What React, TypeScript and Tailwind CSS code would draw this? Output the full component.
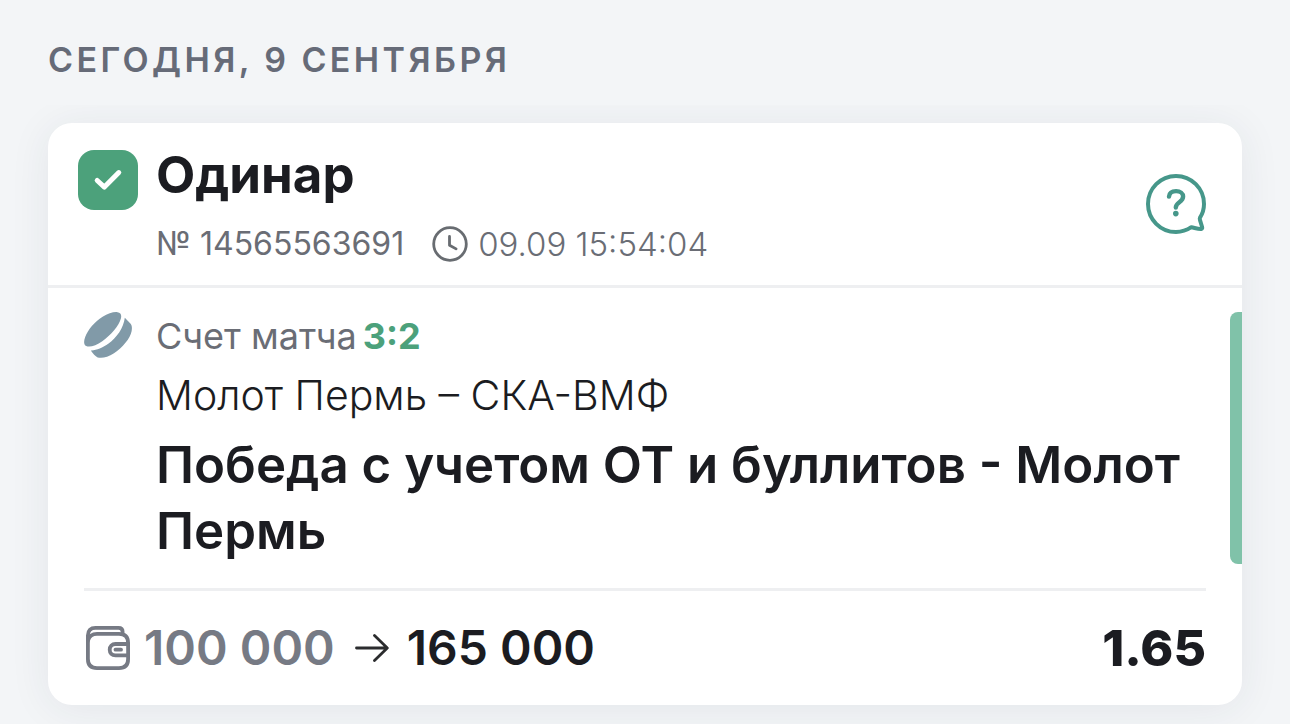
import React from "react";

function CheckBadge() {
  return (
    <span className="flex size-[60px] shrink-0 items-center justify-center rounded-2xl bg-[#4ca17b]">
      <svg viewBox="0 0 60 60" className="size-[60px]" fill="none" role="img" aria-label="Выигрыш">
        <path d="M19.2 30.5L26.4 37.1L40.8 22.6" stroke="#fff" strokeWidth="5" strokeLinecap="round" strokeLinejoin="round" />
      </svg>
    </span>
  );
}

function HelpIcon() {
  return (
    <svg viewBox="0 0 60 60" className="size-[60px]" fill="none" stroke="#46978a" strokeLinecap="round" strokeLinejoin="round" aria-hidden="true">
      <path
        d="M54 43.6C56.6 39.6 58 34.9 58 30A28 28 0 1 0 30 58C35.8 58 40.8 56.3 45.3 53.2C48.8 53.9 52.5 55.3 55.2 55C56.2 54.8 56.4 54 56.1 53L54 46.2C53.7 45.2 53.6 44.4 54 43.6Z"
        strokeWidth="4"
      />
      <path d="M23 22.6C23.3 19 26.2 17.1 30.1 17.1C34.2 17.1 37.1 19.3 37.1 22.6C37.1 28.4 29.8 28.2 29.8 33.6" strokeWidth="4.4" />
      <circle cx="29.8" cy="39.6" r="2.8" fill="#46978a" stroke="none" />
    </svg>
  );
}

function ClockIcon() {
  return (
    <svg viewBox="0 0 36 36" className="size-9 shrink-0" fill="none" stroke="#686c71" strokeWidth="2.8" strokeLinecap="round" strokeLinejoin="round" aria-hidden="true">
      <circle cx="18" cy="18" r="16.3" />
      <path d="M17.5 10.5v8.7l6.6 3.7" />
    </svg>
  );
}

function PuckIcon() {
  return (
    <svg viewBox="0 0 48 46" className="h-[46px] w-12 shrink-0" fill="#819aa8" aria-hidden="true">
      <path d="M33.5.2C36.8.6 37.8 3 36.9 6.6C35 13.6 27 23.2 18.3 29.2C12 33.6 5.8 35.6 2.2 34C-.3 32.8-.4 29.2 1.1 25.2C3.7 18 10.7 9.5 18.6 4.7C24 1.500 29.500-.300 33.500.200Z" />
      <path d="M40.8 5.8L46.4 11.4C48 13 48.200 16 47.600 19.200C46.200 26.400 38.500 35.500 30 41.300C23.700 45.500 17.400 46.600 13.700 45.400C11.200 44 9 41.600 6.800 38.400C12 38.700 18.400 36.100 24.600 31.600C32.500 25.800 39.600 16.200 40.800 5.800Z" />
    </svg>
  );
}

function WalletIcon() {
  return (
    <svg viewBox="0 0 44 44" className="size-11 shrink-0" fill="none" stroke="#767a84" strokeWidth="3.8" strokeLinecap="round" strokeLinejoin="round" aria-hidden="true">
      <path d="M1.9 15V9.5C1.9 4.5 4.5 1.9 9.5 1.9H32.5C35 1.9 36.6 3.3 36.6 5.7V8" />
      <path d="M2.2 14C3.3 9.8 6.3 7.8 11 7.8H33C39 7.8 42.1 11 42.1 17V33C42.1 39 39 42.1 33 42.1H11C5 42.1 1.9 39 1.9 33V15" />
      <path d="M42 18H29.5C26 18 23.7 20.3 23.7 23.7C23.7 27.1 26 29.4 29.5 29.4H42" />
      <path d="M29.5 23.7H35" />
    </svg>
  );
}

function ArrowIcon() {
  return (
    <svg viewBox="0 0 34 28" className="h-7 w-[34px] shrink-0" fill="none" stroke="#2b2c2e" strokeWidth="2.8" strokeLinecap="round" strokeLinejoin="round" role="img" aria-label="выплата">
      <path d="M1.5 14H32M19.5 1.5L32.3 14L19.5 26.5" />
    </svg>
  );
}

function BetCard() {
  return (
    <article className="rounded-3xl bg-white shadow-[0_4px_40px_rgba(40,50,80,0.08)]">
      <header className="flex items-center border-b-[3px] border-[#eeeff1] pr-9 pl-[30px]">
        <div className="flex grow gap-[18px] pt-[27px] pb-[21px]">
          <CheckBadge />
          <div>
            <h2 className="text-[51px] leading-[50px] font-bold">Одинар</h2>
            <div className="mt-6 flex items-center gap-7 text-[32px] leading-10 text-[#6a6d75]">
              <span>№ 14565563691</span>
              <span className="flex items-center gap-2.5">
                <ClockIcon />
                <time className="text-[33px] font-light">09.09 15:54:04</time>
              </span>
            </div>
          </div>
        </div>
        <button type="button" aria-label="Помощь" className="shrink-0">
          <HelpIcon />
        </button>
      </header>

      <div className="flex justify-between pl-9">
        <div className="flex gap-6 py-6">
          <PuckIcon />
          <div>
            <p className="flex gap-1.5 text-[36px] leading-12 text-[#6a6d75]">
              Счет матча <strong className="font-bold text-[#4ca17b]">3:2</strong>
            </p>
            <p className="mt-2 text-[41px] leading-[54px] font-light">Молот Пермь – СКА-ВМФ</p>
            <h3 className="mt-2.5 text-[51px] leading-[66px] font-semibold">
              Победа с учетом ОТ и буллитов - Молот Пермь
            </h3>
          </div>
        </div>
        <div className="my-6 w-3 shrink-0 rounded-l-lg bg-[#80c2a9]" />
      </div>

      <footer className="mx-9 flex items-center justify-between border-t-[3px] border-[#eeeff1] py-7 text-[48px] leading-[58px]">
        <div className="flex items-center">
          <div className="flex items-center gap-3.5 pl-0.5">
            <WalletIcon />
            <span className="font-semibold text-[#767a84]">100 000</span>
          </div>
          <div className="ml-5 flex items-center gap-[18px]">
            <ArrowIcon />
            <span className="font-semibold">165 000</span>
          </div>
        </div>
        <span className="text-[50px] font-extrabold">1.65</span>
      </footer>
    </article>
  );
}

export default function App() {
  return (
    <main className="min-h-screen bg-[#f3f5f7] font-['Inter','Noto_Sans',sans-serif] text-[#1b1c21]">
      <h1 className="px-12 pt-10 pb-[25px] text-[34px] leading-10 font-semibold tracking-widest text-[#666b78] uppercase">
        Сегодня, 9 сентября
      </h1>
      <section className="overflow-hidden px-12 pt-[18px] pb-5">
        <BetCard />
      </section>
    </main>
  );
}
